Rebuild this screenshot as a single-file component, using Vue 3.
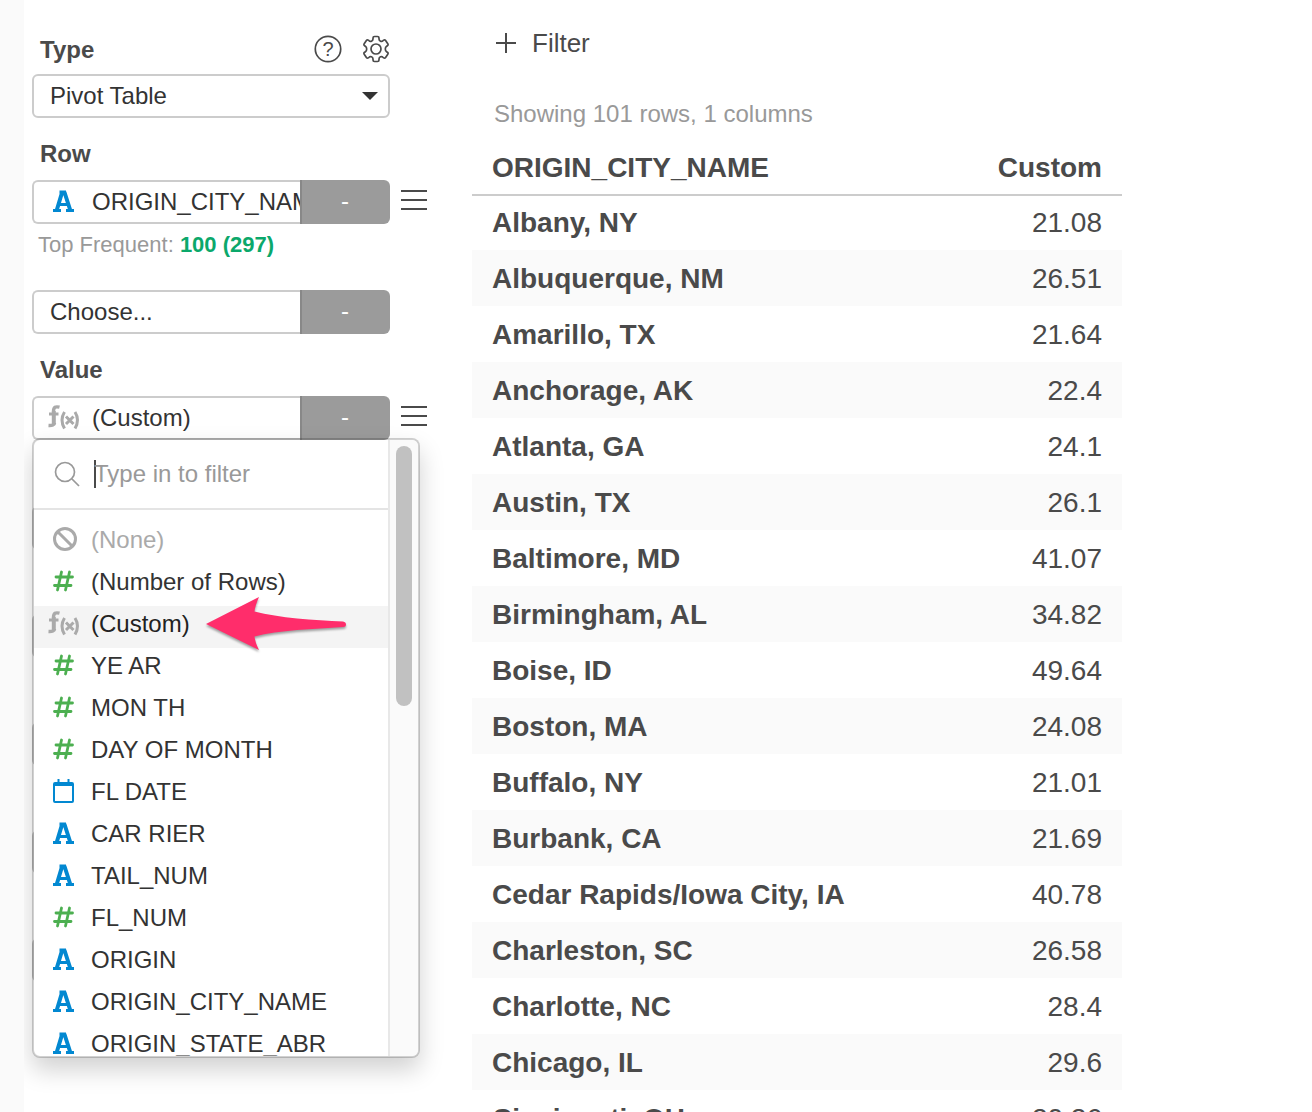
<script setup>
import { h, ref } from 'vue'

const chartType = ref('Pivot Table')
const filterText = ref('')

const fields = [
  { icon: 'none', label: '(None)' },
  { icon: 'number', label: '(Number of Rows)' },
  { icon: 'fx', label: '(Custom)', active: true },
  { icon: 'number', label: 'YE AR' },
  { icon: 'number', label: 'MON TH' },
  { icon: 'number', label: 'DAY OF MONTH' },
  { icon: 'date', label: 'FL DATE' },
  { icon: 'text', label: 'CAR RIER' },
  { icon: 'text', label: 'TAIL_NUM' },
  { icon: 'number', label: 'FL_NUM' },
  { icon: 'text', label: 'ORIGIN' },
  { icon: 'text', label: 'ORIGIN_CITY_NAME' },
  { icon: 'text', label: 'ORIGIN_STATE_ABR' },
]

const rows = [
  ['Albany, NY', '21.08'],
  ['Albuquerque, NM', '26.51'],
  ['Amarillo, TX', '21.64'],
  ['Anchorage, AK', '22.4'],
  ['Atlanta, GA', '24.1'],
  ['Austin, TX', '26.1'],
  ['Baltimore, MD', '41.07'],
  ['Birmingham, AL', '34.82'],
  ['Boise, ID', '49.64'],
  ['Boston, MA', '24.08'],
  ['Buffalo, NY', '21.01'],
  ['Burbank, CA', '21.69'],
  ['Cedar Rapids/Iowa City, IA', '40.78'],
  ['Charleston, SC', '26.58'],
  ['Charlotte, NC', '28.4'],
  ['Chicago, IL', '29.6'],
  ['Cincinnati, OH', '20.26'],
]

// Stroked glyphs for the column types, all on a 32 x 28 grid: [stroke width, path]
const icons = {
  none: { color: '#aaa', strokes: [[3, 'M6.5 13a10.5 10.5 0 1 0 21 0a10.5 10.5 0 1 0-21 0M9.5 5.5l15 15']] },
  number: { color: '#4caf50', cap: 'round', strokes: [[2.8, 'M13.5 4l-4 18M21.5 4l-4 18M8 9h16.5M6.5 17.5h16.5']] },
  date: {
    color: '#0288d1',
    strokes: [
      [2, 'M7 5h17a1 1 0 0 1 1 1v17a1 1 0 0 1-1 1H7a1 1 0 0 1-1-1V6a1 1 0 0 1 1-1z'],
      [3, 'M6 6.5h19'],
      [2, 'M10.5 1v4M20.5 1v4'],
    ],
  },
  text: {
    color: '#0288d1',
    strokes: [
      [4, 'M14.2 4L8.8 22M16.4 4L22.2 22'],
      [3, 'M11.5 4h6.500M10 16.500h11M5 22.500h8M18 22.500h8'],
    ],
  },
  fx: {
    color: '#aaa',
    strokes: [
      [4, 'M5.800 20V7'],
      [3.4, 'M11.500 3.200C7.500 2.200 5.500 3 5.500 7.500M6.500 19Q6.500 21.800 0.500 21.500'],
      [3, 'M1 10h9.500M16.500 8Q11.500 16 16.500 24.500M27 8Q32 16 27 24.500M18 12.500l7.500 7.500M25.500 12.500L18 20'],
    ],
  },
}

function FieldIcon({ type }) {
  const icon = icons[type]
  return h(
    'svg',
    { width: 32, height: 28, viewBox: '0 0 32 28', 'aria-hidden': 'true' },
    icon.strokes.map(([width, d]) =>
      h('path', { d, fill: 'none', stroke: icon.color, 'stroke-width': width, 'stroke-linecap': icon.cap || 'butt' }),
    ),
  )
}
FieldIcon.props = ['type']
</script>

<template>
  <div class="app">
    <aside class="sidebar">
      <div class="type-head">
        <label class="label" for="chart-type">Type</label>
        <div class="tools">
          <button class="icon-btn" aria-label="Help">
            <svg width="28" height="28" viewBox="0 0 28 28">
              <circle cx="14" cy="14" r="12.7" fill="none" stroke="#4a4a4a" stroke-width="1.7" />
              <text x="14" y="21" text-anchor="middle" fill="#4a4a4a" font-size="20">?</text>
            </svg>
          </button>
          <button class="icon-btn" aria-label="Settings">
            <svg width="28" height="28" viewBox="0 0 28 28" fill="none" stroke="#4a4a4a" stroke-width="1.7" stroke-linejoin="round">
              <circle cx="14" cy="14" r="5" />
              <path d="M11 3Q11 1.5 12.5 1.5H15.5Q17 1.5 17 3V4Q17 5.5 18.5 6.2Q20 6.8 21 5.7L21.7 5.1Q22.8 4.4 23.6 5.5L25.8 8.8Q26.6 10 25.4 10.7L24.6 11.3Q23.3 12.2 23.3 14Q23.3 15.8 24.6 16.7L25.4 17.3Q26.6 18 25.8 19.2L23.6 22.5Q22.8 23.6 21.7 22.9L21 22.3Q20 21.2 18.5 21.8Q17 22.5 17 24V25Q17 26.5 15.5 26.5H12.5Q11 26.5 11 25V24Q11 22.5 9.5 21.8Q8 21.2 7 22.3L6.3 22.9Q5.2 23.6 4.4 22.5L2.2 19.2Q1.4 18 2.6 17.3L3.4 16.7Q4.7 15.8 4.7 14Q4.7 12.2 3.4 11.3L2.6 10.7Q1.4 10 2.2 8.8L4.4 5.5Q5.2 4.4 6.3 5.1L7 5.7Q8 6.8 9.5 6.2Q11 5.5 11 4Z" />
            </svg>
          </button>
        </div>
      </div>
      <div class="select-wrap">
        <select id="chart-type" v-model="chartType" class="select">
          <option>Pivot Table</option>
        </select>
        <svg class="caret" width="16" height="8" viewBox="0 0 16 8" aria-hidden="true"><path d="M0 0h16L8 8z" fill="#333" /></svg>
      </div>

      <h2 class="label section">Row</h2>
      <div class="field-row">
        <div class="field">
          <button class="pick"><FieldIcon type="text" /><span>ORIGIN_CITY_NAME</span></button>
          <button class="agg">-</button>
        </div>
        <button class="handle" aria-label="Row options">
          <svg width="26" height="20" viewBox="0 0 26 20"><path d="M0 1h26M0 10h26M0 19h26" stroke="#4a4a4a" stroke-width="2" /></svg>
        </button>
      </div>
      <p class="note">Top Frequent: <a href="#">100 (297)</a></p>
      <div class="field">
        <button class="pick plain">Choose...</button>
        <button class="agg">-</button>
      </div>

      <h2 class="label section">Value</h2>
      <div class="value-block">
        <div class="field-row">
          <div class="field">
            <button class="pick"><FieldIcon type="fx" /><span>(Custom)</span></button>
            <button class="agg">-</button>
          </div>
          <button class="handle" aria-label="Value options">
            <svg width="26" height="20" viewBox="0 0 26 20"><path d="M0 1h26M0 10h26M0 19h26" stroke="#4a4a4a" stroke-width="2" /></svg>
          </button>
        </div>

        <div class="menu">
          <div class="menu-body">
            <label class="search">
              <svg width="26" height="26" viewBox="0 0 26 26" fill="none" stroke="#999" stroke-width="1.7" aria-hidden="true">
                <circle cx="11" cy="11" r="9.5" /><path d="M18 18l7 7" />
              </svg>
              <span class="cursor"></span>
              <input v-model="filterText" type="text" placeholder="Type in to filter" aria-label="Type in to filter" />
            </label>
            <ul class="options">
              <li v-for="f in fields" :key="f.label">
                <button class="option" :class="{ active: f.active, muted: f.icon === 'none' }">
                  <FieldIcon :type="f.icon" /><span>{{ f.label }}</span>
                </button>
                <svg v-if="f.active" class="arrow" width="144" height="60" viewBox="0 0 144 60" aria-hidden="true">
                  <path d="M2 29L55 2Q51 11 50.5 16.5C75 23 110 25 139 26.5Q142 27 142 29.5Q142 32 139 32C110 34 75 35 50.5 41.5Q51 47 55 55Z" fill="#ff2d6b" />
                </svg>
              </li>
            </ul>
          </div>
          <div class="track"><div class="thumb"></div></div>
        </div>
      </div>

      <div v-for="n in 5" :key="n" class="field slot"></div>
    </aside>

    <main class="main">
      <button class="filter">
        <svg width="20" height="20" viewBox="0 0 20 20" aria-hidden="true"><path d="M10 0v20M0 10h20" stroke="#4a4a4a" stroke-width="2" /></svg>
        Filter
      </button>
      <p class="summary">Showing 101 rows, 1 columns</p>
      <table class="pivot">
        <thead>
          <tr><th scope="col">ORIGIN_CITY_NAME</th><th scope="col" class="num">Custom</th></tr>
        </thead>
        <tbody>
          <tr v-for="r in rows" :key="r[0]">
            <th scope="row">{{ r[0] }}</th>
            <td class="num">{{ r[1] }}</td>
          </tr>
        </tbody>
      </table>
    </main>
  </div>
</template>

<style>
body {
  background: #fff;
}
</style>

<style scoped>
* {
  box-sizing: border-box;
}
.app {
  display: flex;
  height: 100vh;
  overflow: hidden;
  border-left: 24px solid #fafafa;
  font-family: "Liberation Sans", Arial, sans-serif;
  font-size: 24px;
  color: #333;
}
button,
select,
input {
  font: inherit;
  color: inherit;
  border: 0;
  padding: 0;
  margin: 0;
  background: none;
  outline: none;
}
svg {
  display: block;
  flex: none;
  overflow: visible;
}
p,
ul {
  margin: 0;
  padding: 0;
  list-style: none;
}
.sidebar {
  flex: 0 0 448px;
  padding: 26px 8px 0;
}
.type-head {
  display: flex;
  align-items: center;
  justify-content: space-between;
  width: 358px;
  height: 48px;
}
.label {
  margin: 0;
  padding-left: 8px;
  font-size: 24px;
  font-weight: 700;
  line-height: 36px;
  color: #4a4a4a;
}
.section {
  margin: 18px 0 8px;
}
.tools {
  display: flex;
  gap: 20px;
  padding-bottom: 2px;
}
.select-wrap {
  display: grid;
  align-items: center;
  width: 358px;
}
.select {
  grid-area: 1 / 1;
  appearance: none;
  width: 100%;
  height: 44px;
  padding: 0 16px 2px;
  border: 2px solid #ccc;
  border-radius: 6px;
}
.caret {
  grid-area: 1 / 1;
  justify-self: end;
  margin-right: 12px;
  pointer-events: none;
}
.field-row {
  display: flex;
  align-items: center;
  gap: 11px;
}
.field {
  display: flex;
  width: 358px;
  height: 44px;
}
.pick {
  flex: 1;
  min-width: 0;
  display: flex;
  align-items: center;
  gap: 12px;
  padding-left: 14px;
  overflow: hidden;
  border: 2px solid #ccc;
  border-right: 0;
  border-radius: 6px 0 0 6px;
  text-align: left;
  white-space: nowrap;
}
.plain {
  padding-left: 16px;
}
.agg {
  flex: 0 0 90px;
  padding: 0 2px 2px 0;
  border-left: 2px solid #888;
  border-radius: 0 6px 6px 0;
  background: #9b9b9b;
  color: #fff;
}
.handle {
  padding-bottom: 4px;
}
.note {
  padding: 7px 6px 31px;
  font-size: 22px;
  line-height: 28px;
  color: #999;
}
.note a {
  color: #0ba86b;
  font-weight: 700;
  text-decoration: none;
}
.value-block {
  position: relative;
  margin-bottom: 66px;
}
.slot {
  margin-bottom: 64px;
  border: 2px solid #ccc;
  border-radius: 6px;
}
.menu {
  position: absolute;
  top: 42px;
  left: 0;
  z-index: 2;
  display: flex;
  width: 388px;
  height: 620px;
  border: 2px solid rgba(0, 0, 0, 0.18);
  border-radius: 8px;
  background: #fff;
  background-clip: padding-box;
  box-shadow: 0 12px 24px rgba(0, 0, 0, 0.18);
}
.menu-body {
  flex: 1;
  overflow: hidden;
  border-radius: 6px 0 0 6px;
}
.search {
  display: flex;
  align-items: center;
  height: 70px;
  padding: 0 20px;
  border-bottom: 2px solid #e4e4e4;
}
.cursor {
  width: 2px;
  height: 28px;
  margin: 0 -2px 0 14px;
  background: #4a4a4a;
}
.search input {
  flex: 1;
  min-width: 0;
}
.search input::placeholder {
  color: #999;
  opacity: 1;
}
.options {
  padding-top: 12px;
}
.options li {
  position: relative;
}
.option {
  display: flex;
  align-items: center;
  gap: 11px;
  width: 100%;
  height: 42px;
  padding: 0 0 6px 14px;
  text-align: left;
  white-space: nowrap;
}
.active {
  background: #f4f4f4;
  color: #222;
}
.muted {
  color: #aaa;
}
.arrow {
  position: absolute;
  left: 170px;
  top: -11px;
  z-index: 1;
  filter: drop-shadow(0 2px 1px rgba(0, 0, 0, 0.35));
}
.track {
  flex: 0 0 30px;
  padding: 6px;
  border-left: 2px solid #e8e8e8;
  border-radius: 0 6px 6px 0;
  background: #fafafa;
}
.thumb {
  width: 16px;
  height: 260px;
  border-radius: 8px;
  background: #c1c1c1;
}
.main {
  flex: 1;
  min-width: 0;
  padding-top: 24px;
}
.filter {
  display: flex;
  align-items: center;
  gap: 16px;
  height: 38px;
  margin-left: 24px;
  font-size: 26px;
  color: #4a4a4a;
}
.summary {
  margin: 36px 0 10px 22px;
  line-height: 32px;
  color: #999;
}
.pivot {
  width: 100%;
  max-width: 650px;
  border-collapse: separate;
  border-spacing: 0;
  font-size: 28px;
  line-height: 32px;
  color: #4a4a4a;
}
.pivot th,
.pivot td {
  height: 56px;
  padding: 2px 20px 0;
  text-align: left;
}
.pivot thead th {
  height: 54px;
}
.pivot tbody tr:first-child > * {
  padding-top: 0;
  border-top: 2px solid #ccc;
}
.pivot tbody tr:nth-child(even) {
  background: #fafafa;
}
.pivot .num {
  text-align: right;
}
</style>
